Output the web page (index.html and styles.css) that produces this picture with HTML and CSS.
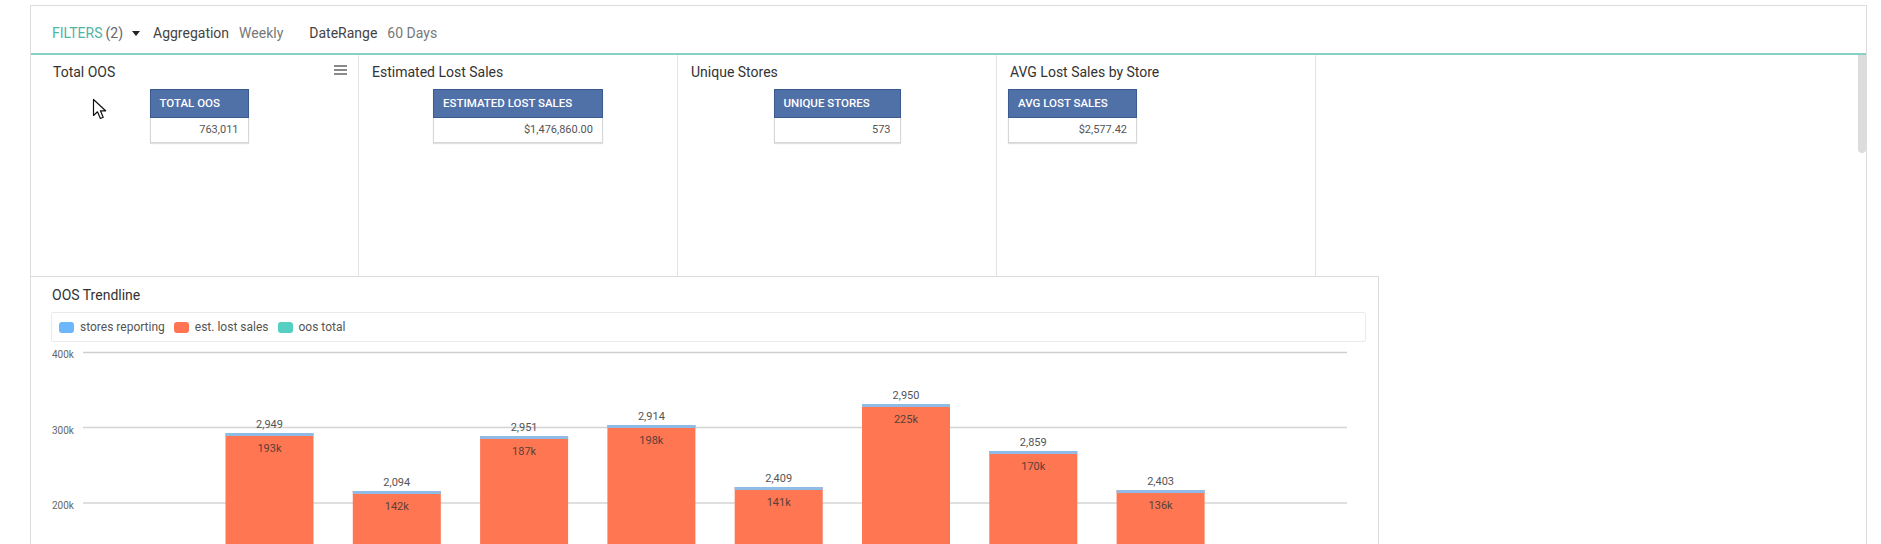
FILE: index.html
```html
<!DOCTYPE html>
<html>
<head>
<meta charset="utf-8">
<link rel="stylesheet" href="styles.css">
</head>
<body>
<div class="frame">
  <div class="filterbar">
    <span class="filters">FILTERS</span><span class="count">(2)</span>
    <span class="caret"></span>
    <span class="fkey">Aggregation</span><span class="fval">Weekly</span>
    <span class="fkey fkey-gap">DateRange</span><span class="fval">60 Days</span>
  </div>
  <div class="body-row">
    <div class="main">
      <div class="kpi-row">
        <div class="kpi">
          <div class="kpi-head">
            <span class="kpi-title">Total OOS</span>
            <span class="menu"><i></i><i></i><i></i></span>
          </div>
          <div class="tbl w1">
            <div class="th">TOTAL OOS</div>
            <div class="td">763,011</div>
          </div>
          <svg class="cursor" width="16" height="23" viewBox="0 0 16 23"><path d="M1.5 1.5 L1.5 17.5 L5.5 13.8 L8.4 20.5 L11.2 19.3 L8.4 12.8 L13.6 12.8 Z" fill="#fff" stroke="#111" stroke-width="1.2" stroke-linejoin="round"/></svg>
        </div>
        <div class="kpi">
          <div class="kpi-head"><span class="kpi-title">Estimated Lost Sales</span></div>
          <div class="tbl w2">
            <div class="th">ESTIMATED LOST SALES</div>
            <div class="td">$1,476,860.00</div>
          </div>
        </div>
        <div class="kpi">
          <div class="kpi-head"><span class="kpi-title">Unique Stores</span></div>
          <div class="tbl w3">
            <div class="th">UNIQUE STORES</div>
            <div class="td">573</div>
          </div>
        </div>
        <div class="kpi kpi-left">
          <div class="kpi-head"><span class="kpi-title">AVG Lost Sales by Store</span></div>
          <div class="tbl w4">
            <div class="th">AVG LOST SALES</div>
            <div class="td">$2,577.42</div>
          </div>
        </div>
      </div>
      <div class="trend">
        <div class="trend-title">OOS Trendline</div>
        <div class="legend">
          <span class="lg"><span class="sw sw-blue"></span>stores reporting</span>
          <span class="lg"><span class="sw sw-orange"></span>est. lost sales</span>
          <span class="lg"><span class="sw sw-teal"></span>oos total</span>
        </div>
        <svg class="chart" width="1315" height="210" viewBox="0 0 1315 210">
          <g class="grid">
            <line x1="32" y1="10.5" x2="1296" y2="10.5" stroke="#cfcfcf" stroke-width="1.5"/>
            <line x1="32" y1="85.5" x2="1296" y2="85.5" stroke="#d4d4d4" stroke-width="1.5"/>
            <line x1="32" y1="161" x2="1296" y2="161" stroke="#d4d4d4" stroke-width="1.5"/>
          </g>
          <g class="axis" font-family="Roboto, sans-serif" font-size="10" fill="#666">
            <text x="1" y="16">400k</text>
            <text x="1" y="91.5">300k</text>
            <text x="1" y="166.5">200k</text>
          </g>
          <g class="bars">
            <rect x="174.5" y="91" width="88" height="130" fill="#ff7652"/><rect x="174.5" y="91" width="88" height="3" fill="#8fbbe6"/>
            <rect x="301.8" y="149" width="88" height="70" fill="#ff7652"/><rect x="301.8" y="149" width="88" height="3" fill="#8fbbe6"/>
            <rect x="429.1" y="94" width="88" height="130" fill="#ff7652"/><rect x="429.1" y="94" width="88" height="3" fill="#8fbbe6"/>
            <rect x="556.4" y="83" width="88" height="130" fill="#ff7652"/><rect x="556.4" y="83" width="88" height="3" fill="#8fbbe6"/>
            <rect x="683.7" y="145" width="88" height="70" fill="#ff7652"/><rect x="683.7" y="145" width="88" height="3" fill="#8fbbe6"/>
            <rect x="811" y="62" width="88" height="150" fill="#ff7652"/><rect x="811" y="62" width="88" height="3" fill="#8fbbe6"/>
            <rect x="938.3" y="109" width="88" height="110" fill="#ff7652"/><rect x="938.3" y="109" width="88" height="3" fill="#8fbbe6"/>
            <rect x="1065.6" y="148" width="88" height="70" fill="#ff7652"/><rect x="1065.6" y="148" width="88" height="3" fill="#8fbbe6"/>
          </g>
          <g class="labels" font-family="Roboto, sans-serif" font-size="11" text-anchor="middle">
            <g fill="#555">
              <text x="218.5" y="86">2,949</text>
              <text x="345.8" y="144">2,094</text>
              <text x="473.1" y="89">2,951</text>
              <text x="600.4" y="78">2,914</text>
              <text x="727.7" y="140">2,409</text>
              <text x="855" y="57">2,950</text>
              <text x="982.3" y="104">2,859</text>
              <text x="1109.6" y="143">2,403</text>
            </g>
            <g fill="#5a4038">
              <text x="218.5" y="110">193k</text>
              <text x="345.8" y="168">142k</text>
              <text x="473.1" y="113">187k</text>
              <text x="600.4" y="102">198k</text>
              <text x="727.7" y="164">141k</text>
              <text x="855" y="81">225k</text>
              <text x="982.3" y="128">170k</text>
              <text x="1109.6" y="167">136k</text>
            </g>
          </g>
        </svg>
      </div>
    </div>
    <div class="scrolltrack"><div class="thumb"></div></div>
  </div>
</div>
</body>
</html>
```

FILE: styles.css
```css
html, body {
  margin: 0;
  padding: 0;
  background: #fff;
  height: 544px;
  overflow: hidden;
}
body {
  font-family: Roboto, "Noto Sans", sans-serif;
  color: #444;
}
.frame {
  margin: 5px 0 0 30px;
  width: 1837px;
  height: 539px;
  overflow: hidden;
  box-sizing: border-box;
  border: 1px solid #dcdcdc;
  border-bottom: none;
  display: flex;
  flex-direction: column;
}
.filterbar {
  flex: none;
  height: 49px;
  box-sizing: border-box;
  border-bottom: 2px solid #86d1c3;
  padding: 6px 0 0 21px;
  display: flex;
  align-items: center;
  font-size: 14px;
  white-space: nowrap;
}
.filters { color: #4cb5a3; }
.count { color: #666; margin-left: 3px; }
.caret {
  width: 0; height: 0;
  border-left: 4px solid transparent;
  border-right: 4px solid transparent;
  border-top: 5px solid #222;
  margin: 1px 13px 0 9px;
}
.fkey { color: #444; }
.fval { color: #777; margin-left: 10px; }
.fkey-gap { margin-left: 26px; }

.body-row {
  display: flex;
  flex: 1;
  min-height: 0;
}
.main {
  flex: 1;
  min-width: 0;
  overflow: hidden;
}
.scrolltrack {
  width: 8px;
  flex: none;
}
.thumb {
  height: 98px;
  background: #dcdcdc;
  border-radius: 0 0 4px 4px;
}

.kpi-row {
  display: flex;
  height: 221px;
  padding-left: 9px;
}
.kpi {
  position: relative;
  width: 319px;
  box-sizing: border-box;
  border-right: 1px solid #e4e4e4;
  padding: 8px 13px 0;
  display: flex;
  flex-direction: column;
  align-items: center;
}
.kpi-left { align-items: flex-start; padding-left: 11px; }
.kpi-head {
  align-self: stretch;
  display: flex;
  justify-content: space-between;
  align-items: flex-start;
  height: 18px;
  line-height: 18px;
  font-size: 14px;
  color: #333;
}
.kpi-left .kpi-head { padding-left: 2px; }
.menu {
  display: flex;
  flex-direction: column;
  gap: 2px;
  width: 13px;
  margin: 2px -2px 0 0;
}
.menu i {
  display: block;
  height: 2px;
  background: #8a8a8a;
}
.tbl {
  margin-top: 8px;
  font-size: 11px;
  box-shadow: 0 1px 1px rgba(0,0,0,0.12);
}
.w1 { width: 99px; }
.w2 { width: 170px; }
.w3 { width: 127px; }
.w4 { width: 129px; }
.th {
  height: 29px;
  box-sizing: border-box;
  background: #5070a8;
  border: 1px solid #3a5a90;
  color: #fff;
  font-weight: 500;
  font-size: 11.5px;
  line-height: 27px;
  padding-left: 9px;
  white-space: nowrap;
}
.td {
  height: 25px;
  box-sizing: border-box;
  border: 1px solid #d6d6d6;
  border-top: none;
  color: #555;
  line-height: 24px;
  text-align: right;
  padding-right: 9px;
}
.cursor {
  position: absolute;
  left: 52px;
  top: 43px;
}

.trend {
  width: 1348px;
  box-sizing: border-box;
  border-top: 1px solid #dcdcdc;
  border-right: 1px solid #dcdcdc;
  padding: 9px 12px 0 20px;
}
.trend-title {
  font-size: 14px;
  line-height: 18px;
  color: #333;
  padding-left: 1px;
}
.legend {
  margin-top: 8px;
  height: 30px;
  box-sizing: border-box;
  border: 1px solid #ebebeb;
  border-radius: 2px;
  display: flex;
  align-items: center;
  padding-left: 7px;
  gap: 9px;
  font-size: 12px;
  color: #555;
}
.lg {
  display: flex;
  align-items: center;
  gap: 6px;
}
.sw {
  width: 15px;
  height: 11px;
  border-radius: 3px;
}
.sw-blue { background: #6cb6fc; }
.sw-orange { background: #ff7452; }
.sw-teal { background: #55cfc1; }
.chart {
  display: block;
}
```
